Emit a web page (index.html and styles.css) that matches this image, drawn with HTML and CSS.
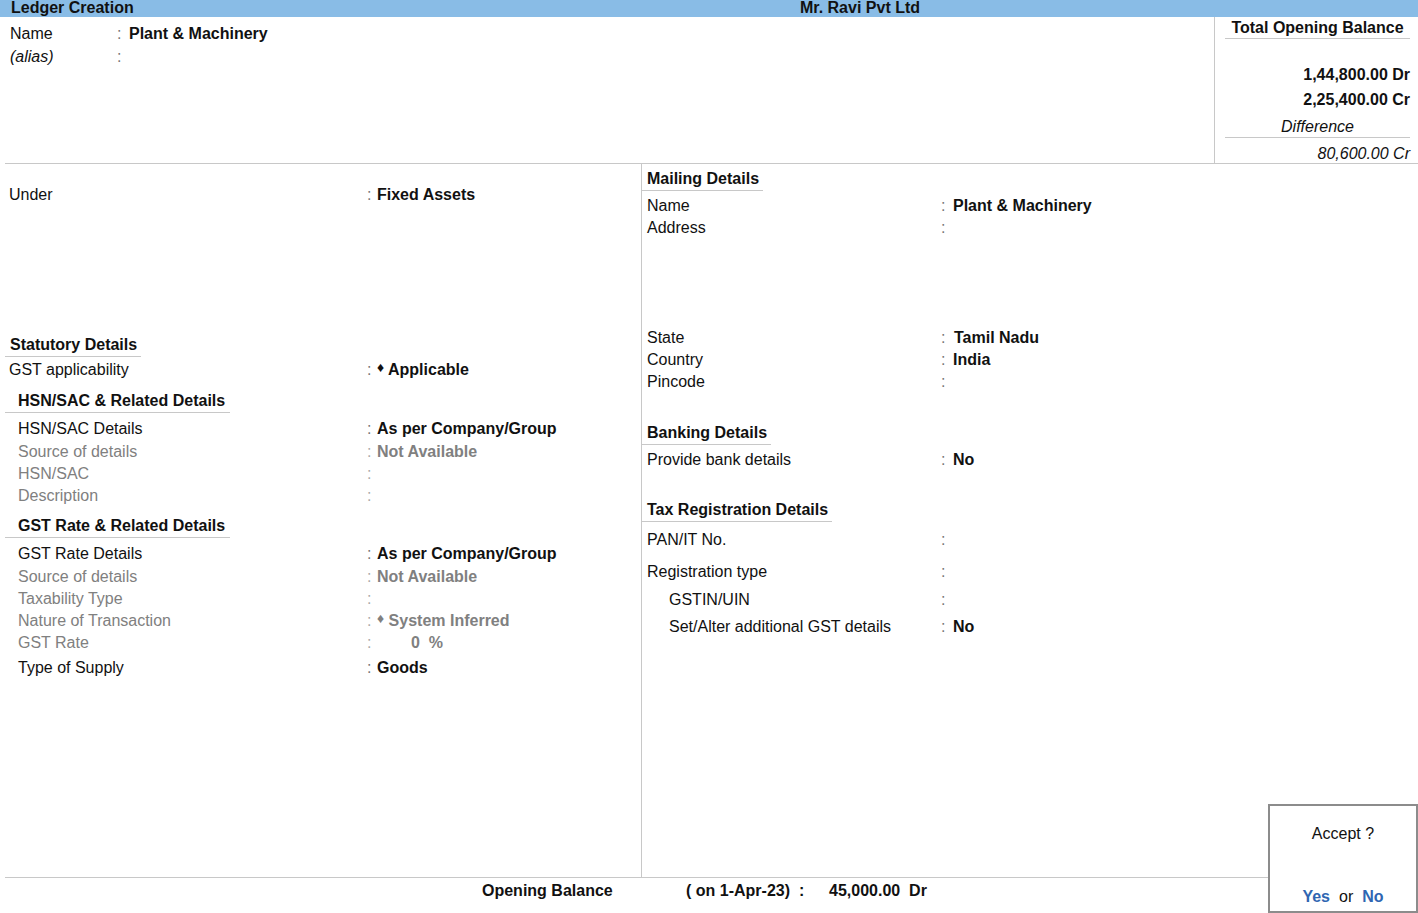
FILE: index.html
```html
<!DOCTYPE html>
<html lang="en">
<head>
  <meta charset="UTF-8">
  <title>Ledger Creation</title>
  <link rel="stylesheet" href="styles.css">
</head>
<body>
  <div class="titlebar">
    <span class="title">Ledger Creation</span>
    <span class="company">Mr. Ravi Pvt Ltd</span>
  </div>

  <div class="sheet">
    <div class="top">
      <div class="identity">
        <div class="id-row"><span>Name</span><span class="colon">:</span><b>Plant &amp; Machinery</b></div>
        <div class="id-row"><i>(alias)</i><span class="colon">:</span><span></span></div>
      </div>
      <div class="balance">
        <div class="balance-title">Total Opening Balance</div>
        <div class="amount first">1,44,800.00 Dr</div>
        <div class="amount">2,25,400.00 Cr</div>
        <div class="diff-label">Difference</div>
        <div class="diff-value">80,600.00 Cr</div>
      </div>
    </div>

    <div class="main">
      <div class="col left">
        <div class="row under"><span class="lbl">Under</span><span class="colon">:</span><b>Fixed Assets</b></div>

        <div class="heading statutory"><span>Statutory Details</span></div>
        <div class="row gap-2"><span class="lbl">GST applicability</span><span class="colon">:</span><b><span class="dot">♦</span> Applicable</b></div>

        <div class="heading sub hsn"><span>HSN/SAC &amp; Related Details</span></div>
        <div class="row gap-5"><span class="lbl in">HSN/SAC Details</span><span class="colon">:</span><b>As per Company/Group</b></div>
        <div class="row muted gap-1"><span class="lbl in">Source of details</span><span class="colon">:</span><b>Not Available</b></div>
        <div class="row muted"><span class="lbl in">HSN/SAC</span><span class="colon">:</span><b></b></div>
        <div class="row muted"><span class="lbl in">Description</span><span class="colon">:</span><b></b></div>

        <div class="heading sub gst"><span>GST Rate &amp; Related Details</span></div>
        <div class="row gap-5"><span class="lbl in">GST Rate Details</span><span class="colon">:</span><b>As per Company/Group</b></div>
        <div class="row muted gap-1"><span class="lbl in">Source of details</span><span class="colon">:</span><b>Not Available</b></div>
        <div class="row muted"><span class="lbl in">Taxability Type</span><span class="colon">:</span><b></b></div>
        <div class="row muted"><span class="lbl in">Nature of Transaction</span><span class="colon">:</span><b><span class="dot">♦</span> System Inferred</b></div>
        <div class="row muted"><span class="lbl in">GST Rate</span><span class="colon">:</span><b class="rate">0 &nbsp;%</b></div>
        <div class="row gap-3"><span class="lbl in">Type of Supply</span><span class="colon">:</span><b>Goods</b></div>
      </div>

      <div class="col right">
        <div class="heading mailing"><span>Mailing Details</span></div>
        <div class="row gap-4"><span class="lbl">Name</span><span class="colon">:</span><b>Plant &amp; Machinery</b></div>
        <div class="row"><span class="lbl">Address</span><span class="colon">:</span><b></b></div>
        <div class="row state"><span class="lbl">State</span><span class="colon">:</span><b class="nudge">Tamil Nadu</b></div>
        <div class="row"><span class="lbl">Country</span><span class="colon">:</span><b>India</b></div>
        <div class="row"><span class="lbl">Pincode</span><span class="colon">:</span><b></b></div>

        <div class="heading banking"><span>Banking Details</span></div>
        <div class="row gap-4"><span class="lbl">Provide bank details</span><span class="colon">:</span><b>No</b></div>

        <div class="heading tax"><span>Tax Registration Details</span></div>
        <div class="row gap-7"><span class="lbl">PAN/IT No.</span><span class="colon">:</span><b></b></div>
        <div class="row gap-10"><span class="lbl">Registration type</span><span class="colon">:</span><b></b></div>
        <div class="row gap-6"><span class="lbl in2">GSTIN/UIN</span><span class="colon">:</span><b></b></div>
        <div class="row gap-5"><span class="lbl in2">Set/Alter additional GST details</span><span class="colon">:</span><b>No</b></div>
      </div>
    </div>

    <div class="footer">
      <b class="f-label">Opening Balance</b>
      <b class="f-date">( on 1-Apr-23)  :</b>
      <b class="f-amount">45,000.00  Dr</b>
    </div>
  </div>

  <div class="accept">
    <div class="accept-q">Accept ?</div>
    <div class="accept-a"><b>Yes</b><span class="or">or</span><b>No</b></div>
  </div>
</body>
</html>
```

FILE: styles.css
```css
* {
  margin: 0;
  padding: 0;
  box-sizing: border-box;
}
html, body {
  width: 1418px;
  height: 913px;
  overflow: hidden;
}
body {
  font-family: "Liberation Sans", Arial, sans-serif;
  font-size: 16px;
  color: #111;
  background: #fff;
  position: relative;
}
b {
  font-weight: bold;
}

/* Title bar */
.titlebar {
  height: 17px;
  background: #89bce6;
  display: flex;
  font-size: 16px;
  font-weight: bold;
  line-height: 15px;
  padding-left: 11px;
}
.titlebar .title {
  width: 789px;
}

.sheet {
  padding-left: 5px;
}

/* Top: name + total balance */
.top {
  display: flex;
  height: 147px;
  border-bottom: 1px solid #c8c8c8;
}
.identity {
  flex: 1;
  padding: 5px 0 0 5px;
}
.id-row {
  display: grid;
  grid-template-columns: 107px 12px 1fr;
  line-height: 23px;
}
.colon {
  color: #777;
}
.balance {
  width: 204px;
  border-left: 1px solid #c8c8c8;
  padding: 0 8px 0 10px;
}
.balance-title {
  font-weight: bold;
  text-align: center;
  line-height: 21px;
  border-bottom: 1px solid #c8c8c8;
}
.amount {
  text-align: right;
  font-weight: bold;
  line-height: 22px;
  margin-top: 3px;
}
.amount.first {
  margin-top: 25px;
}
.diff-label {
  font-style: italic;
  text-align: center;
  line-height: 21px;
  margin-top: 5px;
  border-bottom: 1px solid #c8c8c8;
}
.diff-value {
  font-style: italic;
  text-align: right;
  line-height: 22px;
  margin-top: 5px;
}

/* Main two columns */
.main {
  display: flex;
  height: 714px;
  border-bottom: 1px solid #c8c8c8;
}
.col.left {
  width: 637px;
  border-right: 1px solid #c8c8c8;
}
.col.right {
  flex: 1;
  padding-top: 4px;
}
.row {
  display: grid;
  line-height: 22px;
}
.left .row {
  grid-template-columns: 362px 10px 1fr;
}
.right .row {
  grid-template-columns: 299px 12px 1fr;
}
.lbl {
  padding-left: 4px;
}
.lbl.in {
  padding-left: 13px;
}
.right .lbl {
  padding-left: 5px;
}
.right .lbl.in2 {
  padding-left: 27px;
}
.row.muted {
  color: #808080;
}
.row.muted .colon {
  color: #aaa;
}
.dot {
  font-size: 14px;
  line-height: 0;
  position: relative;
  top: -3px;
}
.rate {
  padding-left: 34px;
}
.nudge {
  padding-left: 1px;
}

.heading {
  font-weight: bold;
  line-height: 22px;
}
.heading span {
  display: inline-block;
  border-bottom: 1px solid #c8c8c8;
  padding: 0 4px 0 5px;
}
.heading.sub span {
  padding: 0 5px 0 13px;
}

.row.under { margin-top: 20px; }
.heading.statutory { margin-top: 128px; }
.heading.hsn { margin-top: 9px; }
.heading.gst { margin-top: 8px; }
.heading.banking { margin-top: 29px; }
.heading.tax { margin-top: 28px; }
.row.state { margin-top: 88px; }
.gap-1 { margin-top: 1px; }
.gap-2 { margin-top: 2px; }
.gap-3 { margin-top: 3px; }
.gap-4 { margin-top: 4px; }
.gap-5 { margin-top: 5px; }
.gap-6 { margin-top: 6px; }
.gap-7 { margin-top: 7px; }
.gap-10 { margin-top: 10px; }

/* Footer */
.footer {
  display: flex;
  padding: 3px 0 0 477px;
  line-height: 20px;
  white-space: pre;
}
.f-label {
  width: 204px;
}
.f-date {
  width: 143px;
}

/* Accept dialog */
.accept {
  position: absolute;
  right: 0;
  bottom: 0;
  width: 150px;
  height: 109px;
  border: 2px solid #8c8c8c;
  background: #fff;
  text-align: center;
}
.accept-q {
  margin-top: 17px;
  line-height: 22px;
}
.accept-a {
  margin-top: 41px;
  line-height: 22px;
}
.accept-a b {
  color: #2f66b2;
}
.accept-a .or {
  margin: 0 9px;
}
```
